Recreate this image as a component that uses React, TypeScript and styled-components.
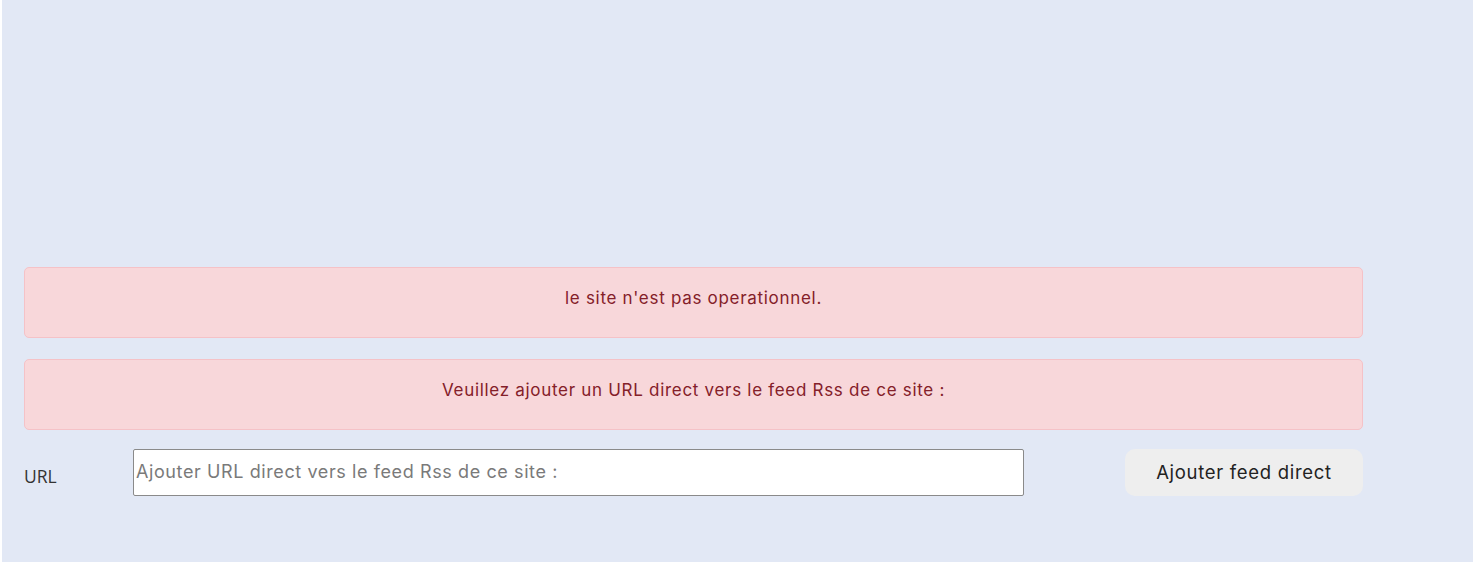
import React from "react";
import styled, { createGlobalStyle } from "styled-components";

const Global = createGlobalStyle`
  html, body { margin: 0; padding: 0; background: #ffffff; }
  body { font-family: "Inter", "Liberation Sans", sans-serif; }
  * { box-sizing: border-box; }
`;

const Page = styled.div`
  margin: 0 3px 0 2px;
  height: 562px;
  background: #e2e8f5;
  padding: 267px 0 0 22px;
  overflow: hidden;
`;

const Column = styled.div`
  width: 1339px;
  display: flex;
  flex-direction: column;
  gap: 21px;
`;

const Alert = styled.div`
  background: #f8d7da;
  border: 1px solid #f5c2c7;
  border-radius: 5px;
  color: #842029;
  font-family: "Inter", "Liberation Sans", sans-serif;
  font-size: 17px;
  line-height: 26px;
  letter-spacing: 0.7px;
  text-align: center;
  padding: 17px 16px 26px;
  height: 71px;
`;

const FormRow = styled.div`
  display: grid;
  grid-template-columns: 109px 891px 1fr;
  align-items: center;
  margin-top: -2px;
`;

const Label = styled.label`
  font-family: "Open Sans", "Liberation Sans", sans-serif;
  font-size: 17.5px;
  color: #333;
  padding-top: 6px;
`;

const Input = styled.input`
  height: 47px;
  width: 100%;
  border: 1px solid #8a8a8a;
  border-radius: 2px;
  background: #fff;
  padding: 0 2px 2px;
  font-family: "Inter", "Liberation Sans", sans-serif;
  font-size: 18px;
  letter-spacing: 0.6px;
  color: #333;
  outline: none;
  &::placeholder { color: #7a7a7a; }
`;

const Button = styled.button`
  justify-self: end;
  width: 238px;
  height: 47px;
  border: none;
  border-radius: 10px;
  background: #eeeeee;
  color: #222;
  font-family: "Inter", "Liberation Sans", sans-serif;
  font-size: 18.5px;
  letter-spacing: 0.7px;
  padding: 0 0 2px;
  cursor: pointer;
`;

export default function App() {
  return (
    <>
      <Global />
      <Page>
        <Column>
          <Alert>le site n'est pas operationnel.</Alert>
          <Alert>Veuillez ajouter un URL direct vers le feed Rss de ce site :</Alert>
          <FormRow>
            <Label htmlFor="url">URL</Label>
            <Input id="url" placeholder="Ajouter URL direct vers le feed Rss de ce site :" />
            <Button type="button">Ajouter feed direct</Button>
          </FormRow>
        </Column>
      </Page>
    </>
  );
}
